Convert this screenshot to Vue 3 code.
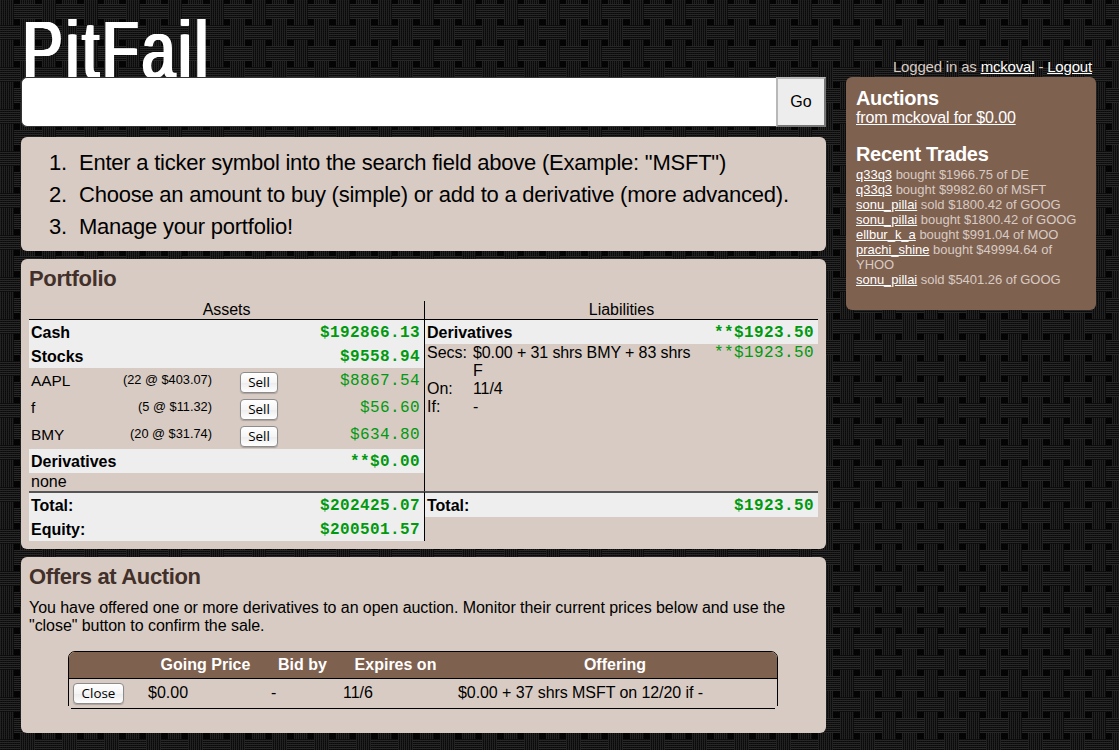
<script setup>
const trades = [
  ['q33q3', 'bought $1966.75 of DE'],
  ['q33q3', 'bought $9982.60 of MSFT'],
  ['sonu_pillai', 'sold $1800.42 of GOOG'],
  ['sonu_pillai', 'bought $1800.42 of GOOG'],
  ['ellbur_k_a', 'bought $991.04 of MOO'],
  ['prachi_shine', 'bought $49994.64 of YHOO'],
  ['sonu_pillai', 'sold $5401.26 of GOOG'],
]
const stocks = [
  ['AAPL', '(22 @ $403.07)', '$8867.54'],
  ['f', '(5 @ $11.32)', '$56.60'],
  ['BMY', '(20 @ $31.74)', '$634.80'],
]
</script>

<template>
  <div class="page">
    <svg class="weave" width="100%" height="100%" aria-hidden="true">
      <defs>
        <pattern id="h-lines" width="2" height="2" patternUnits="userSpaceOnUse">
          <rect width="2" height="2" fill="#090909" />
          <rect width="1" height="2" fill="#101010" />
          <rect width="2" height="1" fill="#272727" />
        </pattern>
        <pattern id="v-lines" width="2" height="2" patternUnits="userSpaceOnUse">
          <rect width="2" height="2" fill="#090909" />
          <rect width="2" height="1" fill="#101010" />
          <rect width="1" height="2" fill="#222" />
        </pattern>
        <pattern id="basket" x="14" y="4" width="42" height="42" patternUnits="userSpaceOnUse">
          <rect width="42" height="42" fill="#040404" />
          <rect x="0" y="0" width="28" height="15" fill="url(#h-lines)" />
          <rect x="21" y="21" width="21" height="15" fill="url(#h-lines)" />
          <rect x="0" y="21" width="6" height="15" fill="url(#h-lines)" />
          <rect x="28" y="0" width="14" height="21" fill="url(#v-lines)" />
          <rect x="28" y="36" width="14" height="6" fill="url(#v-lines)" />
          <rect x="6" y="15" width="15" height="27" fill="url(#v-lines)" />
        </pattern>
      </defs>
      <rect width="100%" height="100%" fill="url(#basket)" />
    </svg>

    <main class="main">
      <h1 class="logo"><span>PitFail</span></h1>
      <form class="search" @submit.prevent>
        <input type="text" aria-label="Ticker" />
        <button>Go</button>
      </form>
      <section class="panel steps">
        <ol>
          <li><span>Enter a ticker symbol into the search field above (Example: "MSFT")</span></li>
          <li><span>Choose an amount to buy (simple) or add to a derivative (more advanced).</span></li>
          <li><span>Manage your portfolio!</span></li>
        </ol>
      </section>

      <section class="panel portfolio">
        <h2>Portfolio</h2>
        <div class="ledger">
          <div class="side assets">
            <div class="caption">Assets</div>
            <div class="row head"><b>Cash</b><span class="money">$192866.13</span></div>
            <div class="row head"><b>Stocks</b><span class="money">$9558.94</span></div>
            <div v-for="s in stocks" :key="s[0]" class="row stock">
              <span class="sym">{{ s[0] }}</span>
              <span class="lot">{{ s[1] }}</span>
              <button class="btn">Sell</button>
              <span class="money">{{ s[2] }}</span>
            </div>
            <div class="row head"><b>Derivatives</b><span class="money">**$0.00</span></div>
            <div class="none">none</div>
          </div>
          <div class="side">
            <div class="caption">Liabilities</div>
            <div class="row head"><b>Derivatives</b><span class="money">**$1923.50</span></div>
            <div class="deriv">
              <dl>
                <dt>Secs:</dt><dd>$0.00 + 31 shrs BMY + 83 shrs<br />F</dd>
                <dt>On:</dt><dd>11/4</dd>
                <dt>If:</dt><dd>-</dd>
              </dl>
              <span class="money">**$1923.50</span>
            </div>
          </div>
          <div class="side assets total">
            <div class="row head"><b>Total:</b><span class="money">$202425.07</span></div>
            <div class="row head"><b>Equity:</b><span class="money">$200501.57</span></div>
          </div>
          <div class="side total">
            <div class="row head"><b>Total:</b><span class="money">$1923.50</span></div>
          </div>
        </div>
      </section>

      <section class="panel offers">
        <h2>Offers at Auction</h2>
        <p>You have offered one or more derivatives to an open auction. Monitor their current prices below and use the<br />"close" button to confirm the sale.</p>
        <div class="auction">
          <div class="arow ahead">
            <span></span><span>Going Price</span><span>Bid by</span><span>Expires on</span><span>Offering</span>
          </div>
          <div class="arow abody">
            <span><button class="btn close">Close</button></span><span>$0.00</span><span>-</span><span class="date">11/6</span><span class="offering">$0.00 + 37 shrs MSFT on 12/20 if -</span>
          </div>
        </div>
      </section>
    </main>

    <aside class="aside">
      <div class="login">Logged in as <a href="#">mckoval</a> - <a href="#">Logout</a></div>
      <div class="box">
        <h3>Auctions</h3>
        <a class="auction-link" href="#">from mckoval for $0.00</a>
        <h3 class="recent">Recent Trades</h3>
        <ul>
          <li v-for="(t, i) in trades" :key="i"><a href="#">{{ t[0] }}</a> {{ t[1] }}</li>
        </ul>
      </div>
    </aside>
  </div>
</template>

<style>
body { background: #0b0b0b; }
</style>

<style scoped>
.page {
  position: relative;
  display: flex;
  gap: 20px;
  box-sizing: border-box;
  width: 1119px;
  height: 750px;
  padding-left: 21px;
  overflow: hidden;
  font: 16px/18px "Liberation Sans", Arial, sans-serif;
  color: #000;
}
.weave { position: absolute; inset: 0; }
.main, .aside { position: relative; }
.main { width: 805px; }
.logo {
  height: 77px;
  margin: 0;
  color: #fff;
  font: 400 80px/99px "Liberation Sans", Arial, sans-serif;
}
.logo span {
  display: inline-block;
  transform: scaleX(0.75);
  transform-origin: 0 0;
  white-space: nowrap;
  letter-spacing: 4.2px;
  text-shadow: 1px 0 #fff, 2px 0 #fff, 3px 0 #fff, 4px 0 #fff;
}
.search { position: relative; display: flex; height: 50px; }
.search input {
  box-sizing: border-box;
  flex: 1;
  min-width: 0;
  height: 50px;
  padding: 0;
  border: 1px solid #333;
  border-right: 0;
  border-radius: 6px 0 0 6px;
  background: #fff;
}
.search button {
  box-sizing: border-box;
  width: 50px;
  height: 50px;
  padding: 0;
  border: 2px solid;
  border-color: #b8b8b8 #777 #777 #b8b8b8;
  background: #ededed;
  font: 16px "Liberation Sans", Arial, sans-serif;
  color: #000;
}
.panel { box-sizing: border-box; padding: 8px; border-radius: 6px; background: #d8cbc3; }
.panel h2 { margin: 0; font-size: 22px; line-height: 24px; letter-spacing: -0.35px; color: #42302a; }
.steps { height: 114px; margin-top: 10px; padding: 10px 8px; }
.steps ol {
  margin: 0;
  padding-left: 20px;
  list-style: none;
  counter-reset: step;
  font-size: 22px;
  line-height: 32px;
  letter-spacing: -0.23px;
  white-space: nowrap;
}
.steps li { display: grid; grid-template-columns: 30px auto; counter-increment: step; }
.steps li::before { content: counter(step) "."; }
.portfolio { height: 290px; margin-top: 8px; }
.ledger { display: grid; grid-template-columns: 396px 393px; grid-template-rows: 190px 50px; margin-top: 10px; }
.side.assets { border-right: 1px solid #000; }
.caption { height: 18px; border-bottom: 1px solid #000; line-height: 18px; letter-spacing: -0.05px; text-align: center; }
.row { display: flex; justify-content: space-between; box-sizing: border-box; padding: 0 4px 0 2px; }
.head { height: 24px; line-height: 25px; background: #eee; }
.money { font: 16px/27px "Liberation Mono", monospace; color: #00990f; letter-spacing: 0.4px; }
.head .money { font-weight: 700; }
.stock { display: grid; grid-template-columns: 88px 93px 28px 38px 1fr; height: 27px; }
.sym { font-size: 15.4px; line-height: 25px; }
.lot { text-align: right; font-size: 12.8px; line-height: 23px; }
.btn {
  grid-column: 4;
  box-sizing: border-box;
  width: 38px;
  height: 21px;
  margin-top: 4px;
  padding: 0;
  border: 1px solid #8c8c8c;
  border-radius: 4px;
  background: linear-gradient(#fff, #f5f5f5 50%, #ececec 51%, #fff);
  box-shadow: 0 1px 1px rgba(0, 0, 0, 0.2);
  font: 13.4px/17px "Open Sans", sans-serif;
  color: #000;
}
.stock .money { text-align: right; }
.none { padding-left: 2px; line-height: 18px; }
.deriv { display: flex; justify-content: space-between; padding: 0 4px 0 2px; }
.deriv dl { display: grid; grid-template-columns: 46px auto; margin: 0; }
.deriv dd { margin: 0; white-space: nowrap; letter-spacing: -0.1px; }
.deriv .money { line-height: 19px; }
.total { border-top: 2px solid #555; }
.offers { height: 176px; margin-top: 8px; }
.offers p { margin: 10px 0 0; white-space: nowrap; letter-spacing: -0.05px; }
.auction {
  position: relative;
  box-sizing: border-box;
  width: 710px;
  height: 58px;
  margin: 16px 0 0 39px;
  border: 1px solid #000;
  border-radius: 7px 7px 0 0;
}
/* The frame is left open at its two lower corners. */
.auction::before, .auction::after {
  content: "";
  position: absolute;
  bottom: -1px;
  width: 3px;
  height: 3px;
  background: #d8cbc3;
}
.auction::before { left: -1px; }
.auction::after { right: -1px; }
.arow { display: grid; grid-template-columns: 75px 123px 71px 115px 324px; }
.ahead {
  height: 26px;
  line-height: 25px;
  border-bottom: 1px solid #000;
  border-radius: 6px 6px 0 0;
  background: #7f6150;
  color: #fff;
  font-weight: 700;
  text-align: center;
}
.abody { height: 30px; line-height: 28px; }
.abody > span { padding-left: 4px; }
.abody > .date, .abody > .offering { padding-left: 5px; }
.offering { letter-spacing: -0.07px; }
.close { width: 51px; display: block; }
.aside { width: 250px; }
.login { height: 19px; padding: 58px 4px 0 0; text-align: right; font-size: 15px; letter-spacing: -0.18px; color: #d8cbc3; }
a { color: #fff; }
.box { box-sizing: border-box; height: 233px; padding: 11px 10px; border-radius: 6px; background: #7f6150; color: #d8cbc3; }
.box h3 { margin: 0; color: #fff; font-size: 20px; line-height: 20px; letter-spacing: -0.33px; }
.auction-link { display: block; margin-top: 1px; line-height: 18px; letter-spacing: -0.14px; }
.box .recent { margin-top: 17px; }
.box ul { margin: 3px 0 0; padding: 0; list-style: none; font-size: 13px; line-height: 15px; letter-spacing: -0.02px; }
</style>
